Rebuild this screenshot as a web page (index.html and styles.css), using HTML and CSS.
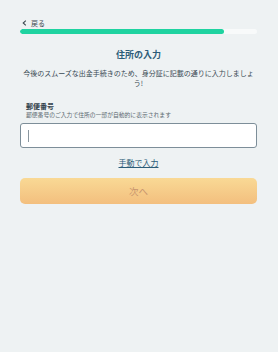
FILE: index.html
```html
<!DOCTYPE html>
<html lang="ja">
<head>
    <meta charset="UTF-8" />
    <meta name="viewport" content="width=device-width, initial-scale=1" />
    <title>住所の入力</title>
    <link rel="stylesheet" href="styles.css">
</head>
<body>
    <div class="page">
        <a class="back" href="#">
            <svg class="back-icon" width="5" height="6" viewBox="0 0 5 6"><path d="M3.8 0.6 L1.2 3 L3.8 5.4" fill="none" stroke="#3d4a52" stroke-width="1.1"/></svg>
            戻る
        </a>
        <div class="progress"><div class="progress-fill" style="width: 86%"></div></div>

        <h1 class="title">住所の入力</h1>
        <p class="desc">今後のスムーズな出金手続きのため、身分証に記載の通りに入力しましょう!</p>

        <form class="form">
            <label class="label" for="zip">郵便番号</label>
            <p class="helper">郵便番号のご入力で住所の一部が自動的に表示されます</p>
            <div class="field" id="zip"><span class="caret"></span></div>
            <a class="manual" href="#">手動で入力</a>
            <button type="button" class="next">次へ</button>
        </form>
    </div>
</body>
</html>
```

FILE: styles.css
```css
html, body { margin: 0; background: #eef2f3; }
body { font-family: "Noto Sans CJK JP", "Noto Sans", sans-serif; color: #3a4a54; }
.page { padding: 18px 21px 0 20px; }
.back { display: flex; align-items: center; gap: 4px; height: 10px; padding-left: 2px; font-size: 7px; line-height: 10px; color: #3d4a52; text-decoration: none; }
.back-icon { display: block; }
.progress { margin-top: 1px; height: 5px; border-radius: 3px; background: #f8fafa; overflow: hidden; }
.progress-fill { height: 100%; border-radius: 3px; background: #1fd3a0; }
.title { margin: 14px 0 0; font-size: 9px; line-height: 13px; font-weight: bold; text-align: center; color: #2c5c78; }
.desc { margin: 7px 0 0; font-size: 7px; line-height: 10px; text-align: center; color: #3a4a54; }
.form { margin-top: 13px; display: flex; flex-direction: column; }
.label { padding-left: 6px; font-size: 7px; line-height: 10px; font-weight: bold; color: #33424c; }
.helper { margin: 0; padding-left: 6px; font-size: 5.8px; line-height: 8px; color: #5a6870; }
.field { margin-top: 4px; height: 23px; border: 1px solid #7d8e99; border-radius: 3px; background: #fff; display: flex; align-items: center; padding-left: 7px; }
.caret { width: 1px; height: 12px; background: #8a969e; }
.manual { margin-top: 9px; align-self: center; font-size: 8px; line-height: 11px; color: #2c5c78; text-decoration: underline; }
.next { margin-top: 10px; height: 26px; border: none; border-radius: 5px; background: linear-gradient(#f9d995, #f3bf7e); color: #c8956e; font-family: inherit; font-size: 9.5px; }
```
